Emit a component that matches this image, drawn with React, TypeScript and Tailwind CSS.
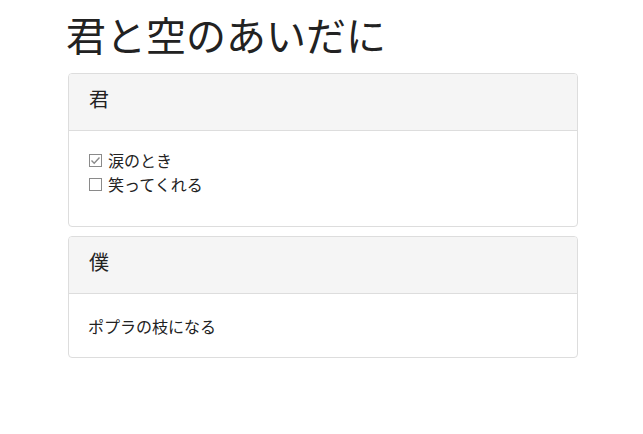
import React from "react";

const font = { fontFamily: '"Noto Sans CJK JP", "Noto Sans", sans-serif' };

function Box({ checked }: { checked?: boolean }) {
  return (
    <svg width="13" height="13" viewBox="0 0 13 13" className="shrink-0">
      <rect x="0.5" y="0.5" width="12" height="12" fill="white" stroke="#8a8a8a" strokeWidth="1" />
      {checked && (
        <path d="M2.5 6.5 L5.2 9.2 L10.5 3.5" fill="none" stroke="#8a8a8a" strokeWidth="1.4" />
      )}
    </svg>
  );
}

export default function App() {
  return (
    <div className="min-h-[434px] bg-white text-[#333]" style={font}>
      <div className="w-[510px] ml-[68px] pt-[6px]">
        <h1 className="text-[40px] leading-[56px] font-normal text-[#222] -ml-[2px]">君と空のあいだに</h1>
        <div className="mt-[11px] border border-[#ddd] rounded-[4px] overflow-hidden">
          <div className="h-[57px] bg-[#f5f5f5] border-b border-[#ddd] px-5 flex items-center text-[20px] leading-[24px] text-[#222]">
            <span className="-mt-[7px]">君</span>
          </div>
          <div className="h-[95px] px-5 pt-[17px] text-[16px] leading-[24px] text-[#222]">
            <label className="flex items-center gap-[6px]">
              <Box checked />
              <span>涙のとき</span>
            </label>
            <label className="flex items-center gap-[6px]">
              <Box />
              <span>笑ってくれる</span>
            </label>
          </div>
        </div>
        <div className="mt-[9px] border border-[#ddd] rounded-[4px] overflow-hidden">
          <div className="h-[57px] bg-[#f5f5f5] border-b border-[#ddd] px-5 flex items-center text-[20px] leading-[24px] text-[#222]">
            <span className="-mt-[7px]">僕</span>
          </div>
          <div className="h-[63px] px-5 flex items-center text-[16px] leading-[24px] text-[#222]">
            <span className="-ml-[1px]">ポプラの枝になる</span>
          </div>
        </div>
      </div>
    </div>
  );
}
